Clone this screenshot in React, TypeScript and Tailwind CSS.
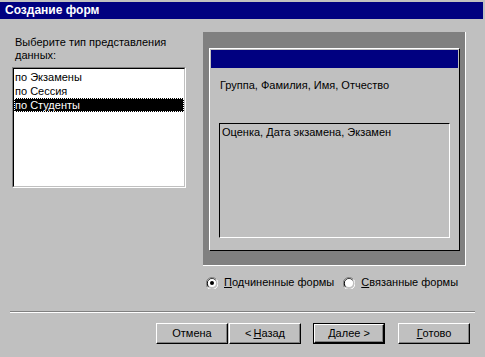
const raised =
  "border border-t-white border-l-white border-r-black border-b-black shadow-[inset_-1px_-1px_0_#808080]";

const Radio = ({ checked }: { checked?: boolean }) => (
  <svg width="12" height="12" viewBox="0 0 12 12" className="shrink-0">
    <path d="M10.5 2.5 A5.5 5.5 0 0 0 1.5 10.5" fill="none" stroke="#808080" strokeWidth="1" />
    <path d="M9.6 3.4 A4.3 4.3 0 0 0 2.4 9.6" fill="none" stroke="#000" strokeWidth="1" />
    <path d="M1.5 10.5 A5.5 5.5 0 0 0 10.5 2.5" fill="none" stroke="#fff" strokeWidth="1" />
    <circle cx="6" cy="6" r="4" fill="#fff" />
    {checked && <circle cx="6" cy="6" r="2" fill="#000" />}
  </svg>
);

const Button = ({
  children,
  isDefault,
  className = "",
}: {
  children: React.ReactNode;
  isDefault?: boolean;
  className?: string;
}) =>
  isDefault ? (
    <div className={`h-[21px] w-[72px] border border-black ${className}`}>
      <div className={`flex h-full w-full items-center justify-center bg-[#c0c0c0] ${raised}`}>
        {children}
      </div>
    </div>
  ) : (
    <div
      className={`flex h-[21px] w-[72px] items-center justify-center bg-[#c0c0c0] ${raised} ${className}`}
    >
      {children}
    </div>
  );

export default function App() {
  return (
    <div className="h-[357px] w-[485px] overflow-hidden bg-[#c0c0c0] pt-[2px] font-['Liberation_Sans',Arial,sans-serif] text-[11px] leading-[13px] text-black">
      <div className="mr-[2px] flex h-[17px] items-center bg-[#000080] pl-[5px] text-[12px] font-bold text-white">
        Создание форм
      </div>

      <div className="flex items-start">
        {/* left column */}
        <div className="ml-[12px] mt-[17px] w-[174px]">
          <p className="pl-[3px]">
            Выберите тип представления
            <br />
            данных:
          </p>
          <div className="mt-[5px] h-[121px] w-[174px] border border-t-[#808080] border-l-[#808080] border-r-white border-b-white">
            <div className="h-full w-full border border-t-black border-l-black border-r-[#c0c0c0] border-b-[#c0c0c0] bg-white pt-[1px]">
              <div className="h-[14px] pl-[1px] leading-[14px]">по Экзамены</div>
              <div className="h-[14px] pl-[1px] leading-[14px]">по Сессия</div>
              <div className="h-[14px] border border-dotted border-white bg-black pl-0 leading-[12px] text-white">
                по Студенты
              </div>
            </div>
          </div>
        </div>

        {/* preview */}
        <div className="ml-[17px] mt-[13px] h-[234px] w-[263px] border-b border-r border-white bg-[#808080] pb-[14px] pl-[6px] pr-[5px] pt-[16px]">
          <div className="h-full w-full border border-b-black border-l-white border-r-black border-t-white bg-[#c0c0c0] p-[1px]">
            <div className="h-[18px] bg-[#000080]" />
            <p className="mt-[11px] pl-[9px]">Группа, Фамилия, Имя, Отчество</p>
            <div className="ml-[8px] mt-[31px] h-[115px] w-[231px] border border-b-white border-l-black border-r-white border-t-black px-[2px] pt-[2px]">
              Оценка, Дата экзамена, Экзамен
            </div>
          </div>
        </div>
      </div>

      {/* radios */}
      <div className="ml-[206px] mt-[10px] flex items-center">
        <Radio checked />
        <span className="ml-[6px]">
          <u>П</u>одчиненные формы
        </span>
        <span className="ml-[9px]">
          <Radio />
        </span>
        <span className="ml-[6px]">
          <u>С</u>вязанные формы
        </span>
      </div>

      {/* separator */}
      <div className="ml-[10px] mt-[22px] h-[2px] w-[465px] border-b border-t border-b-white border-t-[#808080]" />

      {/* buttons */}
      <div className="ml-[156px] mt-[10px] flex">
        <Button>Отмена</Button>
        <Button className="ml-[1px]">
          &lt; <u className="ml-[2px]">Н</u>азад
        </Button>
        <Button isDefault className="ml-[12px]">
          <u>Д</u>алее &gt;
        </Button>
        <Button className="ml-[13px]">
          <u>Г</u>отово
        </Button>
      </div>
    </div>
  );
}
